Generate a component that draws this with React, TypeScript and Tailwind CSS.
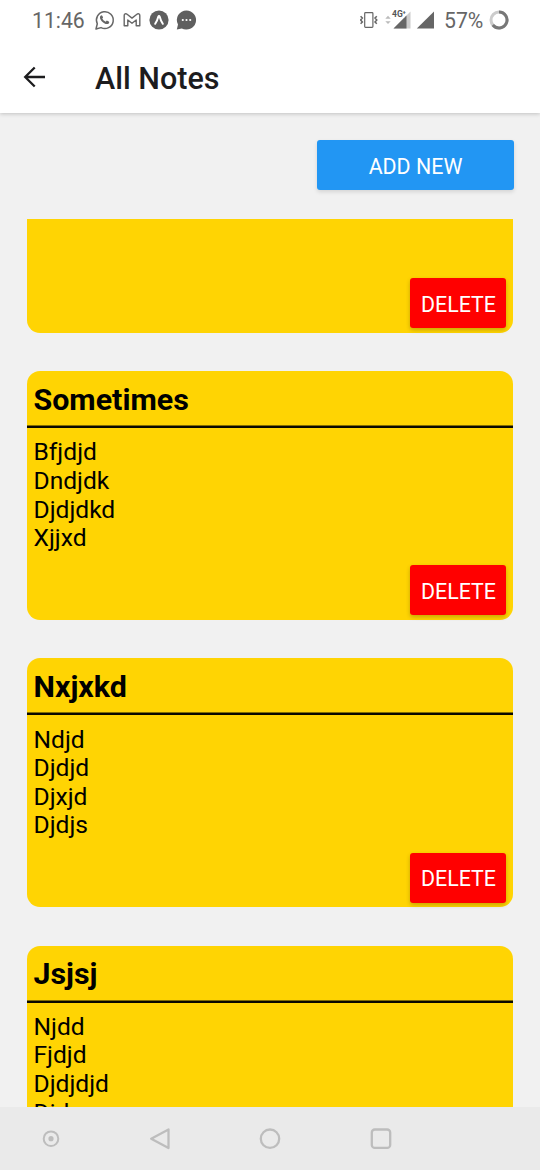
type Note = { title: string; lines: string[] };

const notes: Note[] = [
  { title: "Sometimes", lines: ["Bfjdjd", "Dndjdk", "Djdjdkd", "Xjjxd"] },
  { title: "Nxjxkd", lines: ["Ndjd", "Djdjd", "Djxjd", "Djdjs"] },
  { title: "Jsjsj", lines: ["Njdd", "Fjdjd", "Djdjdjd", "Djdx"] },
];

function StatusBar() {
  return (
    <div className="flex h-[40px] shrink-0 items-center justify-between pl-8 pr-[31px] text-[#666]">
      <div className="flex items-center">
        <span className="w-[62px] pt-px text-[21.2px] leading-6">11:46</span>
        <svg width="21" height="22" viewBox="0 0 21 22" fill="none" stroke="currentColor" strokeWidth="1.5">
          <path d="M2 20l1.3-5.2A8.4 8.4 0 1 1 7 18.6z" strokeLinejoin="round" />
          <path d="M6.6 6.8c.6-.8 1.4-.7 1.8.1l.7 1.5-.8 1.2c.8 1.5 1.9 2.5 3.4 3.1l1.1-1.2 2 .9c.7.4.5 1.7-.4 2.3-1.1.7-2.6.4-4.2-.5-1.9-1.1-3.4-2.8-4-4.5-.4-1.2-.2-2.2.4-2.9z" fill="currentColor" stroke="none" />
        </svg>
        <svg className="ml-2" width="18" height="16" viewBox="0 0 18 16" fill="none" stroke="currentColor" strokeWidth="1.4" strokeLinejoin="round">
          <path d="M1.2 13.7V3.6C1.2 1.9 2.8 1.3 4.1 2.3L9 6.1l4.9-3.8c1.3-1 2.9-.4 2.9 1.3v10.1h-3.6V8L9 11.2 4.8 8v5.7z" />
        </svg>
        <svg className="ml-[8px]" width="20" height="20" viewBox="0 0 20 20">
          <circle cx="10" cy="10" r="9.6" fill="#5f5f5f" />
          <path d="M6.2 13.8Q8.2 10.8 9.2 6.9q.8-1.6 1.6 0 1 3.9 3 6.9" fill="none" stroke="#fff" strokeWidth="2" strokeLinejoin="round" strokeLinecap="round" />
        </svg>
        <svg className="ml-[7px]" width="21" height="20" viewBox="0 0 21 20">
          <path d="M10.5.4a9.6 9.6 0 1 1-4.7 18L.8 19.4l1.2-4.8A9.6 9.6 0 0 1 10.5.4z" fill="#5f5f5f" />
          <g fill="#fff">
            <circle cx="6.8" cy="10" r="1.1" /><circle cx="10.5" cy="10" r="1.1" /><circle cx="14.2" cy="10" r="1.1" />
          </g>
        </svg>
      </div>
      <div className="flex items-center">
        <svg width="20" height="18" viewBox="0 0 20 18" fill="none" stroke="currentColor" strokeWidth="1.2">
          <rect x="4.7" y="1.7" width="8.2" height="14.6" rx="0.8" />
          <path d="M.6 5.2l1.8 1.9L.6 9l1.8 1.9-1.8 1.9M16.8 5.2L15 7.1 16.8 9 15 10.9l1.8 1.9" strokeWidth="1.5" />
        </svg>
        <svg className="ml-[5px]" width="29" height="22" viewBox="0 0 29 22">
          <path d="M.3 9.7L3 6.8l2.7 2.9zM.3 12.2L3 15.1l2.7-2.9z" fill="#bbb" />
          <path d="M25.5 2.5v17h-17z" fill="#ccc" />
          <path d="M21.5 6.5v13h-13z" fill="#666" />
          <path d="M6 0h14v8.2H6z" fill="#fff" />
          <text x="7" y="8" fontSize="8.5" fontWeight="700" fill="#555">4G</text>
          <text x="17.5" y="5.4" fontSize="6" fontWeight="700" fill="#555">+</text>
        </svg>
        <svg className="ml-[2px]" width="19" height="18" viewBox="0 0 19 18">
          <path d="M18 .5v17H.8z" fill="#666" />
        </svg>
        <span className="ml-[9px] w-[45px] pt-px text-[21.2px] leading-6">57%</span>
        <svg width="20" height="20" viewBox="0 0 20 20" fill="none" strokeWidth="3">
          <circle cx="10" cy="10" r="8" stroke="#ccc" />
          <path d="M10 2a8 8 0 1 1-6.2 13" stroke="#777" />
        </svg>
      </div>
    </div>
  );
}

function DeleteButton() {
  return (
    <button className="mb-[4.8px] mr-[7px] h-[50px] w-[96px] shrink-0 rounded-[3px] bg-[#ff0000] pl-px pt-[3px] text-[21.4px] leading-6 text-white shadow-[0_2px_4px_rgba(0,0,0,0.22)]">
      DELETE
    </button>
  );
}

function NoteCard({ title, lines }: Note) {
  return (
    <article className="flex h-[249px] shrink-0 flex-col rounded-[13px] bg-[#ffd403]">
      <h2 className="h-[54px] shrink-0 pl-[6.5px] pt-[10.5px] text-[30.4px] font-bold leading-9">{title}</h2>
      <svg className="block shrink-0" width="486" height="3" viewBox="0 0 486 3">
        <path d="M0 .4h486v2.5H0z" fill="#0a0800" />
      </svg>
      <div className="grow pl-[6.5px] pt-[10.2px] text-[24.6px] leading-[28.6px]">
        {lines.map((line) => <p key={line}>{line}</p>)}
      </div>
      <div className="-mt-4 flex justify-end"><DeleteButton /></div>
    </article>
  );
}

function NavBar() {
  return (
    <nav className="flex h-[63px] shrink-0 items-center bg-[#eaeaea] pl-[41px] text-[#bdbdbd]">
      <svg width="20" height="20" viewBox="0 0 20 20" fill="none" stroke="currentColor" strokeWidth="2">
        <circle cx="10" cy="9.7" r="7.3" /><circle cx="10" cy="9.7" r="2.6" fill="currentColor" stroke="none" />
      </svg>
      <svg className="ml-[88px]" width="22" height="22" viewBox="0 0 22 22" fill="none" stroke="currentColor" strokeWidth="2.3" strokeLinejoin="round">
        <path d="M19.5 1.4v18.6L2.2 10.7z" />
      </svg>
      <svg className="ml-[88px]" width="22" height="22" viewBox="0 0 22 22" fill="none" stroke="currentColor" strokeWidth="2.3">
        <circle cx="11" cy="10.7" r="9.2" />
      </svg>
      <svg className="ml-[89px]" width="22" height="22" viewBox="0 0 22 22" fill="none" stroke="currentColor" strokeWidth="2.3">
        <rect x="1.8" y="1.5" width="18.4" height="18.4" rx="3" />
      </svg>
    </nav>
  );
}

export default function App() {
  return (
    <div className="flex h-[1170px] w-[540px] flex-col overflow-hidden bg-[#f1f1f1] font-['Roboto',sans-serif] text-black">
      <div className="z-10 h-[113px] shrink-0 bg-white shadow-[0_1px_4px_rgba(0,0,0,0.2)]">
        <StatusBar />
        <header className="flex h-[73px] items-center pl-[23px] text-[#1c1c1e]">
          <svg width="23" height="22" viewBox="0 0 23 22" fill="none" stroke="currentColor" strokeWidth="2.3">
            <path d="M22 11H2.4M11.7 1.5L2.2 11l9.5 9.5" />
          </svg>
          <h1 className="ml-[49px] pt-[4px] text-[30.5px] font-medium leading-9">All Notes</h1>
        </header>
      </div>
      <div className="flex h-[105.5px] shrink-0 justify-end pr-[26px] pt-[27px]">
        <button className="h-[50px] w-[197px] rounded-[3px] bg-[#2296f3] pt-[3px] text-[21.4px] leading-6 text-white shadow-[0_2px_4px_rgba(0,0,0,0.12)]">
          ADD NEW
        </button>
      </div>
      <main className="flex min-h-0 grow flex-col gap-[38.2px] overflow-hidden px-[27px]">
        <article className="flex h-[114.5px] shrink-0 items-end justify-end rounded-b-[13px] bg-[#ffd403]">
          <DeleteButton />
        </article>
        {notes.map((note) => <NoteCard key={note.title} {...note} />)}
      </main>
      <NavBar />
    </div>
  );
}
